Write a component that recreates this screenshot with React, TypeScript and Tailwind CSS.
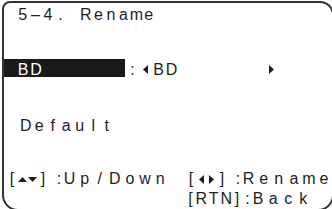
import React from 'react';

// one glyph per fixed-width cell, like the LCD font in the manual
function Cells({ text, cell }: { text: string; cell: string }) {
  return (
    <span className="inline-flex">
      {text.split('').map((ch, i) => (
        <span key={i} className={`${cell} shrink-0 inline-block text-center whitespace-pre`}>
          {ch}
        </span>
      ))}
    </span>
  );
}

function Tri({ dir }: { dir: 'left' | 'right' | 'up' | 'down' }) {
  const horiz = dir === 'left' || dir === 'right';
  const pts = {
    left: '5,0 5,9 0,4.5',
    right: '0,0 0,9 5,4.5',
    up: '0,5 9,5 4.5,0',
    down: '0,0 9,0 4.5,5',
  }[dir];
  return (
    <svg width={horiz ? 5 : 9} height={horiz ? 9 : 5} viewBox={horiz ? '0 0 5 9' : '0 0 9 5'}>
      <polygon points={pts} fill="#1e1e1e" />
    </svg>
  );
}

function Slot({ cell, children }: { cell: string; children: React.ReactNode }) {
  return <span className={`${cell} shrink-0 flex justify-center items-center`}>{children}</span>;
}

function KeyLine({ keys, keysW, label }: { keys: React.ReactNode; keysW: string; label: string }) {
  return (
    <div className="flex h-[20px] leading-[20px]">
      <div className={`${keysW} flex shrink-0`}>{keys}</div>
      <Cells text=":" cell="w-[6px]" />
      <Cells text={label} cell="w-[15.1px]" />
    </div>
  );
}

function ArrowKeys({ a, b }: { a: 'left' | 'up'; b: 'right' | 'down' }) {
  return (
    <>
      <Cells text="[" cell="w-[10px]" />
      <Slot cell="w-[10px] h-[20px] pt-[2px]">
        <Tri dir={a} />
      </Slot>
      <Slot cell="w-[10px] h-[20px] pt-[2px]">
        <Tri dir={b} />
      </Slot>
      <Cells text="]" cell="w-[12px]" />
    </>
  );
}

export default function App() {
  return (
    <div className="w-[332px] h-[209px] overflow-hidden bg-white">
      <div className="ml-[2px] mt-[1px] w-[332px] h-[210px] border-2 border-[#333] rounded-tl-[8px] rounded-tr-[14px] rounded-br-[16px] rounded-bl-[16px] font-['Liberation_Sans',Arial,sans-serif] text-[16px] text-[#1e1e1e] flex flex-col">
        {/* title */}
        <div className="mt-[1.5px] h-[20px] leading-[20px] pl-[12.5px]">
          <Cells text="5–4. Rename" cell="w-[12.6px]" />
        </div>

        {/* selected name row */}
        <div className="mt-[34.5px] h-[18px] flex">
          <div className="w-[121px] h-[18px] bg-[#1a1a1a] text-white leading-[22px] pl-[12.5px]">
            <Cells text="BD" cell="w-[13px]" />
          </div>
          <div className="h-[18px] leading-[22px] flex ml-[1px]">
            <Cells text=":" cell="w-[13px]" />
            <Slot cell="w-[13px] h-[18px] pt-[3px]">
              <Tri dir="left" />
            </Slot>
            <Cells text="BD" cell="w-[13px]" />
            <span className="w-[86.5px] shrink-0" />
            <Slot cell="w-[13px] h-[18px] pt-[3px]">
              <Tri dir="right" />
            </Slot>
          </div>
        </div>

        {/* default */}
        <div className="mt-[38.5px] h-[20px] leading-[20px] pl-[15px]">
          <Cells text="Default" cell="w-[13.5px]" />
        </div>

        {/* key guide */}
        <div className="mt-[33px] flex">
          <div className="w-[182px] pl-[3px] shrink-0">
            <KeyLine keysW="w-[49px]" label="Up/Down" keys={<ArrowKeys a="up" b="down" />} />
          </div>
          <div className="flex flex-col">
            <KeyLine keysW="w-[49px]" label="Rename" keys={<ArrowKeys a="left" b="right" />} />
            <KeyLine
              keysW="w-[58.5px]"
              label="Back"
              keys={
                <>
                  <Cells text="[" cell="w-[9px]" />
                  <Cells text="RTN" cell="w-[12.5px]" />
                  <Cells text="]" cell="w-[9px]" />
                </>
              }
            />
          </div>
        </div>
      </div>
    </div>
  );
}
